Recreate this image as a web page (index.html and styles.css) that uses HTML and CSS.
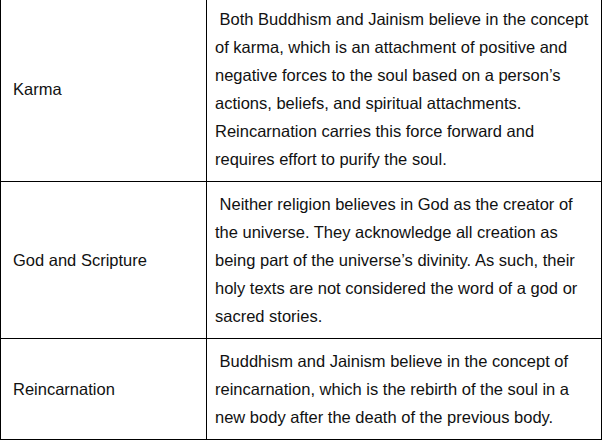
FILE: index.html
```html
<!DOCTYPE html>
<html>
<head>
<meta charset="utf-8">
<link rel="stylesheet" href="styles.css">
</head>
<body>
<table class="compare">
  <colgroup>
    <col class="col-topic">
    <col class="col-desc">
  </colgroup>
  <tr>
    <td class="topic">Karma</td>
    <td class="desc">&nbsp;Both Buddhism and Jainism believe in the concept of karma, which is an attachment of positive and negative forces to the soul based on a person’s actions, beliefs, and spiritual attachments. Reincarnation carries this force forward and requires effort to purify the soul.</td>
  </tr>
  <tr>
    <td class="topic">God and Scripture</td>
    <td class="desc">&nbsp;Neither religion believes in God as the creator of the universe. They acknowledge all creation as being part of the universe’s divinity. As such, their holy texts are not considered the word of a god or sacred stories.</td>
  </tr>
  <tr>
    <td class="topic">Reincarnation</td>
    <td class="desc">&nbsp;Buddhism and Jainism believe in the concept of reincarnation, which is the rebirth of the soul in a new body after the death of the previous body.</td>
  </tr>
</table>
</body>
</html>
```
FILE: styles.css
```css
html, body {
  margin: 0;
  padding: 0;
  background: #ffffff;
}
.compare {
  border-collapse: collapse;
  table-layout: fixed;
  width: 602px;
  margin-top: -4px;
  font-family: "Liberation Sans", Arial, sans-serif;
  font-size: 16.5px;
  line-height: 28px;
  color: #111111;
}
.col-topic {
  width: 206px;
}
.compare td {
  border: 1px solid #000000;
  padding: 8px 6px 8px 8px;
  vertical-align: middle;
}
.compare td.topic {
  padding-left: 12px;
}
```
